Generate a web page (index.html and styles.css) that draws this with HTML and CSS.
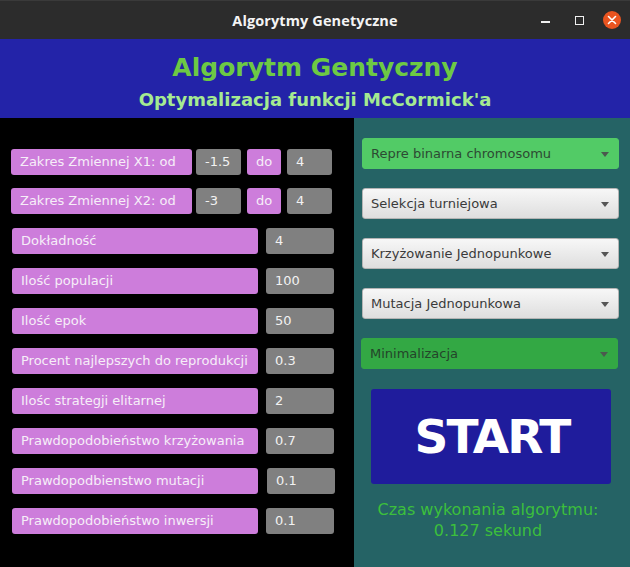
FILE: index.html
```html
<!DOCTYPE html>
<html lang="pl">
<head>
<meta charset="utf-8">
<title>Algorytmy Genetyczne</title>
<link rel="stylesheet" href="styles.css">
</head>
<body>
<div class="window">
  <div class="titlebar">
    <span class="wtitle">Algorytmy Genetyczne</span>
    <div class="controls">
      <span class="ctl min"></span>
      <span class="ctl max"></span>
      <span class="ctl close">
        <svg width="18" height="18" viewBox="0 0 18 18"><path d="M5.5 5.5 L12.5 12.5 M12.5 5.5 L5.5 12.5" stroke="#fff" stroke-width="1.6" stroke-linecap="round"/></svg>
      </span>
    </div>
  </div>
  <header class="header">
    <h1 class="h-title">Algorytm Gentyczny</h1>
    <h2 class="h-sub">Optymalizacja funkcji McCormick'a</h2>
  </header>
  <main class="main">
    <section class="left">
      <div class="row row-range">
        <div class="lbl lbl-range">Zakres Zmiennej X1: od</div>
        <div class="fld fld-sm">-1.5</div>
        <div class="lbl lbl-do">do</div>
        <div class="fld fld-sm">4</div>
      </div>
      <div class="row row-range row-2">
        <div class="lbl lbl-range">Zakres Zmiennej X2: od</div>
        <div class="fld fld-sm">-3</div>
        <div class="lbl lbl-do">do</div>
        <div class="fld fld-sm">4</div>
      </div>
      <div class="row row-full"><div class="lbl lbl-wide">Dokładność</div><div class="fld fld-wide">4</div></div>
      <div class="row row-full"><div class="lbl lbl-wide">Ilość populacji</div><div class="fld fld-wide">100</div></div>
      <div class="row row-full"><div class="lbl lbl-wide">Ilość epok</div><div class="fld fld-wide">50</div></div>
      <div class="row row-full"><div class="lbl lbl-wide">Procent najlepszych do reprodukcji</div><div class="fld fld-wide">0.3</div></div>
      <div class="row row-full"><div class="lbl lbl-wide">Ilośc strategji elitarnej</div><div class="fld fld-wide">2</div></div>
      <div class="row row-full"><div class="lbl lbl-wide">Prawdopodobieństwo krzyżowania</div><div class="fld fld-wide">0.7</div></div>
      <div class="row row-full"><div class="lbl lbl-wide">Prawdopodbienstwo mutacji</div><div class="fld fld-wide fld-shift">0.1</div></div>
      <div class="row row-full"><div class="lbl lbl-wide">Prawdopodobieństwo inwersji</div><div class="fld fld-wide">0.1</div></div>
    </section>
    <section class="right">
      <div class="combo combo-green">Repre binarna chromosomu<span class="arrow"></span></div>
      <div class="combo">Selekcja turniejowa<span class="arrow"></span></div>
      <div class="combo">Krzyżowanie Jednopunkowe<span class="arrow"></span></div>
      <div class="combo">Mutacja Jednopunkowa<span class="arrow"></span></div>
      <div class="combo combo-dark">Minimalizacja<span class="arrow"></span></div>
      <button class="start">START</button>
      <p class="time">Czas wykonania algorytmu:<br>0.127 sekund</p>
    </section>
  </main>
</div>
</body>
</html>
```

FILE: styles.css
```css
* { box-sizing: border-box; }
html, body { margin: 0; padding: 0; }
body {
  width: 630px;
  height: 567px;
  overflow: hidden;
  font-family: "DejaVu Sans", "Liberation Sans", sans-serif;
  background: #000;
}
.window {
  display: flex;
  flex-direction: column;
  height: 567px;
}
.titlebar {
  height: 39px;
  background: #2c2c2c;
  border-top: 1px solid #3a3a3a;
  display: flex;
  align-items: center;
  justify-content: center;
  position: relative;
}
.wtitle {
  color: #f4f4f4;
  font-family: "Open Sans", "DejaVu Sans", sans-serif;
  font-weight: 700;
  font-size: 14.5px;
  letter-spacing: 0.1px;
}
.controls {
  position: absolute;
  right: 9px;
  top: 10px;
  display: flex;
  align-items: center;
}
.ctl { display: block; }
.ctl.min {
  width: 9px;
  height: 2px;
  background: #f0f0f0;
  margin-top: 4px;
  margin-right: 25px;
}
.ctl.max {
  width: 9px;
  height: 9px;
  border: 1px solid #f0f0f0;
  margin-right: 19px;
}
.ctl.close {
  width: 18px;
  height: 18px;
  border-radius: 50%;
  background: #e95420;
}
.ctl.close svg { display: block; }
.header {
  height: 79px;
  background: #2323a8;
  text-align: center;
  padding-top: 14px;
}
.h-title {
  margin: 0;
  color: #6dc944;
  font-size: 25px;
  font-weight: 700;
  line-height: 30px;
}
.h-sub {
  margin: 6px 0 0;
  color: #a5ea91;
  font-size: 18px;
  font-weight: 700;
  line-height: 22px;
}
.main {
  flex: 1;
  display: flex;
}
.left {
  width: 354px;
  background: #000;
  padding: 31px 0 0 11px;
  display: flex;
  flex-direction: column;
  gap: 14px;
}
.row {
  display: flex;
  height: 26px;
}
.row-2 { margin-top: -1px; }
.row-full { padding-left: 1px; }
.lbl {
  background: #cd7ddb;
  color: #f6eef8;
  border-radius: 3px;
  font-size: 13px;
  line-height: 26px;
  padding-left: 9px;
  white-space: nowrap;
}
.lbl-range { width: 181px; margin-right: 4px; }
.lbl-do { width: 34px; padding-left: 9px; margin: 0 6px; }
.lbl-wide { width: 246px; margin-right: 8px; }
.fld {
  background: #808080;
  color: #f2f2f2;
  border-radius: 3px;
  font-size: 13px;
  line-height: 26px;
  padding-left: 9px;
}
.fld-sm { width: 45px; }
.fld-wide { width: 68px; }
.fld-shift { margin-left: 1px; }
.right {
  flex: 1;
  background: #256365;
  padding: 20px 0 0 8px;
  display: flex;
  flex-direction: column;
  align-items: flex-start;
}
.combo {
  width: 257px;
  height: 31px;
  margin-bottom: 19px;
  border: 1px solid #b4b4b4;
  border-radius: 3px;
  background: linear-gradient(#f7f7f7, #dedede);
  color: #3a3a3a;
  font-size: 13px;
  line-height: 29px;
  padding-left: 8px;
  position: relative;
}
.combo-green {
  background: #52cb66;
  border-color: #52cb66;
  color: #2d4a33;
}
.combo-dark {
  background: #33a844;
  border-color: #33a844;
  color: #24442a;
  margin-left: -1px;
}
.arrow {
  position: absolute;
  right: 9px;
  top: 13px;
  width: 0;
  height: 0;
  border-left: 4.5px solid transparent;
  border-right: 4.5px solid transparent;
  border-top: 5px solid #555;
}
.combo-green .arrow, .combo-dark .arrow { border-top-color: #4b5a4e; }
.start {
  margin: 1px 0 0 9px;
  width: 240px;
  height: 95px;
  background: #1f1c9c;
  border: none;
  border-radius: 3px;
  color: #fff;
  font-family: "DejaVu Sans", sans-serif;
  font-weight: 700;
  font-size: 47px;
  letter-spacing: -2px;
  padding: 0 0 0 2px;
}
.time {
  margin: 15px 0 0 0;
  width: 252px;
  text-align: center;
  color: #3cbf3c;
  font-size: 16px;
  line-height: 21px;
}
```
